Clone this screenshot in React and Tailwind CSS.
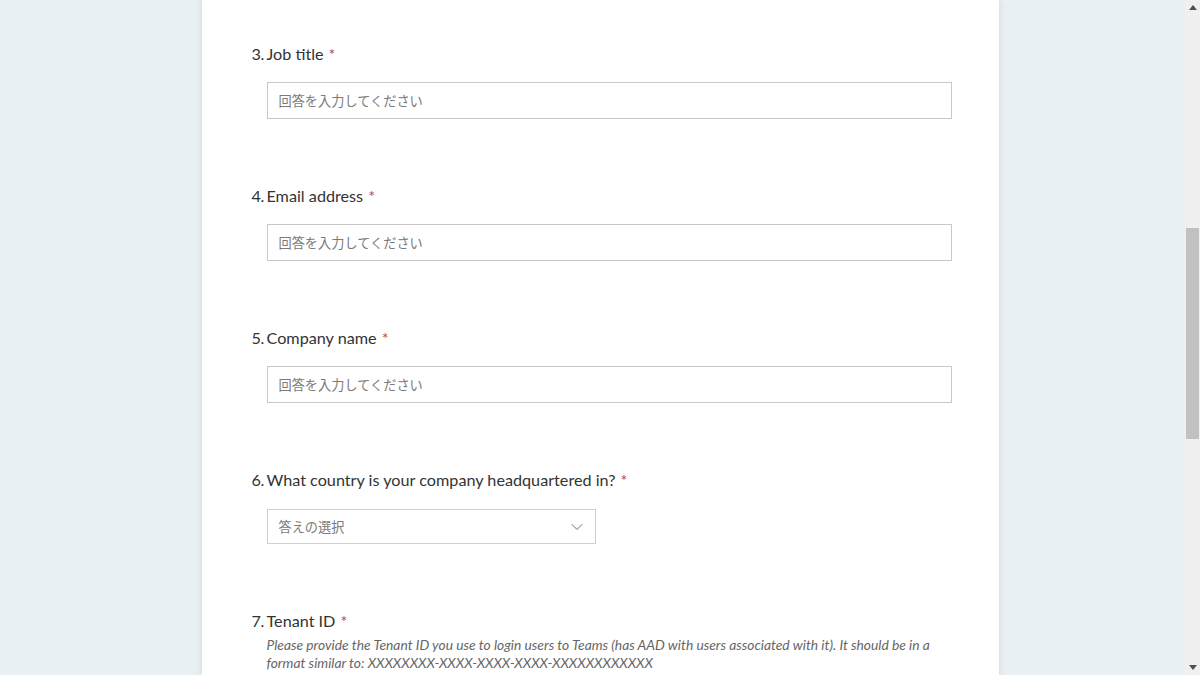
import { ChevronDown } from 'lucide-react';

const questions = [
    { no: 3, title: 'Job title', kind: 'text' },
    { no: 4, title: 'Email address', kind: 'text' },
    { no: 5, title: 'Company name', kind: 'text' },
    { no: 6, title: 'What country is your company headquartered in?', kind: 'choice' },
];

const QuestionTitle = ({ no, title }) => (
    <div className="flex items-baseline text-[16.2px] leading-6 text-[#333]">
        <span className="w-[15px] shrink-0 tracking-[-0.5px]">{no}.</span>
        <span>{title}</span>
        <span className="ml-[5px] text-[#c43e3e]">*</span>
    </div>
);

const App = () => {
    return (
        <div className="flex h-[675px] w-[1200px] overflow-hidden bg-[#e9f0f3] font-['Lato','Noto_Sans_CJK_JP',sans-serif]">
            {/* Page area */}
            <div className="flex flex-1 justify-center pr-[2px]">
                <div className="ml-[17px] w-[797px] bg-white shadow-[0_0_6px_rgba(0,0,0,0.12)]">
                    <div className="pl-[50px] pr-[47px] pt-[42px]">
                        {questions.map((q) => (
                            <div key={q.no} className="mb-[65px]">
                                <QuestionTitle no={q.no} title={q.title} />
                                {q.kind === 'text' ? (
                                    <div className="ml-[15px] mt-[16px] flex h-[37px] items-center border border-[#c8c8c8] px-[11px] font-['Noto_Sans_CJK_JP',sans-serif] text-[13.2px] text-[#7a7a7a]">
                                        回答を入力してください
                                    </div>
                                ) : (
                                    <div className="ml-[15px] mt-[17px] flex h-[35px] w-[329px] items-center justify-between border border-[#d0d0d0] pl-[11px] pr-[8px] font-['Noto_Sans_CJK_JP',sans-serif] text-[13.2px] text-[#7a7a7a]">
                                        <span>答えの選択</span>
                                        <ChevronDown size={20} strokeWidth={1} className="text-[#555]" />
                                    </div>
                                )}
                            </div>
                        ))}

                        <div className="mt-[3px]">
                            <QuestionTitle no={7} title="Tenant ID" />
                            <p className="ml-[15px] mt-[3px] text-[13.8px] italic leading-[18px] text-[#666]">
                                Please provide the Tenant ID you use to login users to Teams (has AAD with users associated with it). It should be in a format similar to: XXXXXXXX-XXXX-XXXX-XXXX-XXXXXXXXXXXX
                            </p>
                        </div>
                    </div>
                </div>
            </div>

            {/* Scrollbar */}
            <div className="flex w-[15px] flex-col items-center bg-[#f0f0f0]">
                <div className="flex h-[15px] items-center justify-center">
                    <svg width="8" height="5" viewBox="0 0 8 5"><path d="M4 0L8 5H0z" fill="#505050" /></svg>
                </div>
                <div className="h-[213px]" />
                <div className="h-[211px] w-[13px] bg-[#c1c1c1]" />
                <div className="flex-1" />
                <div className="flex h-[15px] items-center justify-center">
                    <svg width="8" height="5" viewBox="0 0 8 5"><path d="M0 0H8L4 5z" fill="#505050" /></svg>
                </div>
            </div>
        </div>
    );
};

export default App;
